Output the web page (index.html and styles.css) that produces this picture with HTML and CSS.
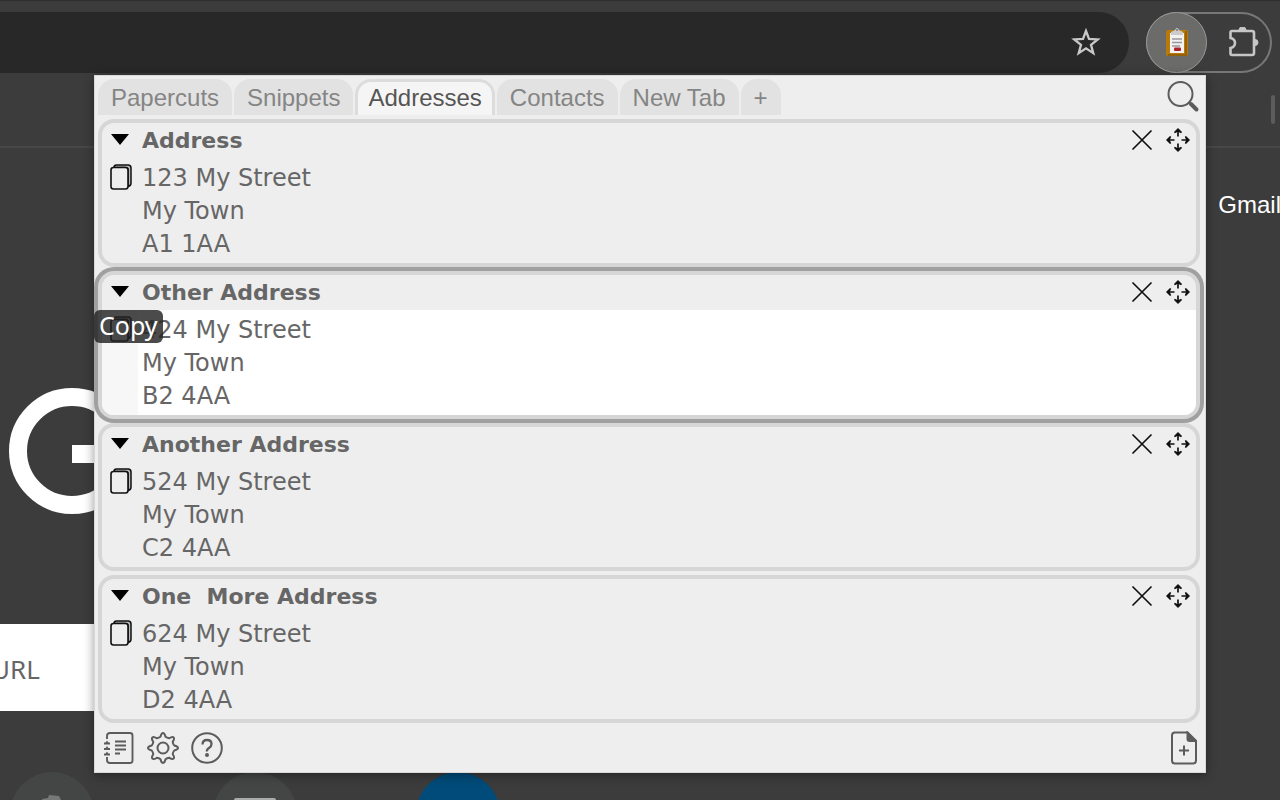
FILE: index.html
```html
<!DOCTYPE html>
<html lang="en">
<head>
<meta charset="utf-8">
<title>Papercuts</title>
<link rel="stylesheet" href="styles.css">
</head>
<body>
<svg class="defs" aria-hidden="true">
  <symbol id="close" viewBox="0 0 20 20"><path d="M1 1l18 18M19 1L1 19" fill="none" stroke="#111" stroke-width="1.7" stroke-linecap="round"/></symbol>
  <symbol id="move" viewBox="0 0 24 24"><path d="M12 8.500V2M12 15.500V22M8.500 12H2M15.500 12H22" fill="none" stroke="#111" stroke-width="1.700"/><path d="M12 0l4 4-.8 1.200-3.200-1.400-3.200 1.400L8 4zM12 24l4-4-.8-1.200-3.200 1.400-3.200-1.400L8 20zM0 12l4-4 1.200.8-1.400 3.200 1.400 3.200L4 16zM24 12l-4-4-1.200.8 1.400 3.200-1.400 3.200L20 16z" fill="#111"/></symbol>
  <symbol id="copy" viewBox="0 0 22 26"><path d="M4 3.500Q4 1 6.500 1H18q3 0 3 3v15q0 3-3 3.500V6q0-2.500-2.500-2.500z" fill="#bbb" stroke="#111" stroke-width="1.500"/><rect x="1" y="3.500" width="17" height="21.500" rx="2.500" fill="#eee" stroke="#111" stroke-width="1.600"/></symbol>
</svg>

<header class="toolbar">
  <div class="omnibox">
    <button class="plain" aria-label="Bookmark this tab"><svg width="30" height="30" viewBox="0 0 30 30"><path d="M15 3l3 8 8.700.4-6.700 5.400 2.300 8.400-7.300-4.800-7.300 4.800 2.300-8.400-6.700-5.400 8.700-.4z" fill="none" stroke="#c9c9c9" stroke-width="2.300"/></svg></button>
  </div>
  <div class="extensions">
    <button class="plain current" aria-label="Clipboard extension"><svg width="24" height="30" viewBox="0 0 24 30"><rect x="1" y="3" width="22" height="26" rx="2" fill="#b87a08"/><path d="M21 4v24H3" fill="none" stroke="#956006" stroke-width="2"/><path d="M5 6h14v20H5z" fill="#f2f2f2"/><path d="M7 12h10M7 15.500h10M7 19h8" stroke="#999" stroke-width="1.300"/><rect x="9" y="20.500" width="7" height="3.500" rx="1" fill="#b02028"/><path d="M6 8V5l4-2q2-4 4 0l4 2v3z" fill="#ccc"/><circle cx="12" cy="3" r="1" fill="#777"/></svg></button>
    <button class="plain" aria-label="Extensions"><svg width="32" height="32" viewBox="0 0 32 32"><path d="M5 4h20q2 0 2 2v20q0 2-2 2H5q-1.500 0-1.500-1.500V21q4.500-1 4.500-5t-4.500-5V5.500Q3.500 4 5 4z" fill="none" stroke="#c6c6c6" stroke-width="2.600"/><path d="M12 3q0-3 3.500-3T19 3zM28 12.500q3 0 3 3t-3 3z" fill="#c6c6c6" stroke="#c6c6c6"/></svg></button>
  </div>
</header>
<div class="bookmarks"><span class="divider"></span></div>
<main class="page">
  <nav class="links"><a href="#">Gmail</a></nav>
  <svg class="logo" width="128" height="128" viewBox="0 0 128 128" aria-label="Logo"><circle cx="64" cy="64" r="54" fill="none" stroke="#fff" stroke-width="18"/><path d="M64 58h60v18H64z" fill="#fff"/></svg>
  <div class="search">URL</div>
  <div class="shortcuts">
    <span class="dot"><svg width="84" height="84" viewBox="0 0 84 84"><path d="M32 27l6-1 1-3 10 1 2 4 5 3-4 12-16-2z" fill="#777"/></svg></span>
    <span class="dot"><svg width="84" height="84" viewBox="0 0 84 84"><rect x="21" y="26" width="42" height="28" rx="2" fill="#aaa"/></svg></span>
    <span class="dot blue"></span>
  </div>
</main>

<section class="popup" aria-label="Papercuts">
  <div class="top">
    <nav class="tabs">
      <button class="tab">Papercuts</button>
      <button class="tab">Snippets</button>
      <button class="tab active">Addresses</button>
      <button class="tab">Contacts</button>
      <button class="tab">New Tab</button>
      <button class="tab" aria-label="Add tab">+</button>
    </nav>
    <button class="plain" aria-label="Search"><svg width="34" height="34" viewBox="0 0 34 34"><circle cx="14.500" cy="15" r="12" fill="none" stroke="#5c5c5c" stroke-width="2"/><path d="M23 23.500l2 2" stroke="#5c5c5c" stroke-width="2.400"/><path d="M25 25l5.500 5.500" stroke="#5c5c5c" stroke-width="4" stroke-linecap="round"/></svg></button>
  </div>

  <div class="cards">
    <article class="card">
      <header class="head"><button class="plain toggle" aria-label="Collapse"></button><h2>Address</h2><button class="plain" aria-label="Delete"><svg width="20" height="20"><use href="#close"/></svg></button><button class="plain" aria-label="Move"><svg width="24" height="24"><use href="#move"/></svg></button></header>
      <div class="body"><div class="side"><button class="plain" aria-label="Copy"><svg width="22" height="26"><use href="#copy"/></svg></button></div><p class="text">123 My Street<br>My Town<br>A1 1AA</p></div>
    </article>
    <article class="card hover">
      <header class="head"><button class="plain toggle" aria-label="Collapse"></button><h2>Other Address</h2><button class="plain" aria-label="Delete"><svg width="20" height="20"><use href="#close"/></svg></button><button class="plain" aria-label="Move"><svg width="24" height="24"><use href="#move"/></svg></button></header>
      <div class="body"><div class="side"><button class="plain" aria-label="Copy"><svg width="22" height="26"><use href="#copy"/></svg></button><span class="tip" role="tooltip">Copy</span></div><p class="text">424 My Street<br>My Town<br>B2 4AA</p></div>
    </article>
    <article class="card">
      <header class="head"><button class="plain toggle" aria-label="Collapse"></button><h2>Another Address</h2><button class="plain" aria-label="Delete"><svg width="20" height="20"><use href="#close"/></svg></button><button class="plain" aria-label="Move"><svg width="24" height="24"><use href="#move"/></svg></button></header>
      <div class="body"><div class="side"><button class="plain" aria-label="Copy"><svg width="22" height="26"><use href="#copy"/></svg></button></div><p class="text">524 My Street<br>My Town<br>C2 4AA</p></div>
    </article>
    <article class="card">
      <header class="head"><button class="plain toggle" aria-label="Collapse"></button><h2>One  More Address</h2><button class="plain" aria-label="Delete"><svg width="20" height="20"><use href="#close"/></svg></button><button class="plain" aria-label="Move"><svg width="24" height="24"><use href="#move"/></svg></button></header>
      <div class="body"><div class="side"><button class="plain" aria-label="Copy"><svg width="22" height="26"><use href="#copy"/></svg></button></div><p class="text">624 My Street<br>My Town<br>D2 4AA</p></div>
    </article>
  </div>

  <footer class="bottom">
    <button class="plain" aria-label="Notebook"><svg width="32" height="32" viewBox="0 0 32 32" fill="none" stroke="#5c5c5c" stroke-width="1.900"><path d="M4 7V4q0-3 3-3h20q2.500 0 2.500 2.500v25q0 2.500-2.500 2.500H7q-3 0-3-3v-3"/><path d="M12 9.500h11M12 13.500h11M12 17.500h11M12 21.500h5" stroke-width="1.800"/><path d="M1 11.500h6M1 17h6M1 22.500h6"/><path d="M4 8.500l2 3H2zM4 14l2 3H2zM4 19.500l2 3H2z" fill="#5c5c5c" stroke="none"/></svg></button>
    <button class="plain" aria-label="Settings"><svg width="32" height="32" viewBox="0 0 32 32" fill="none" stroke="#5c5c5c" stroke-width="2" stroke-linejoin="round"><path d="M13.500 4.800Q14.400 1 16 1T18.500 4.800Q20 6 22.200 6.300Q25.400 4.100 26.600 5.400T25.700 9.800Q26 12 27.200 13.500Q31 14.400 31 16T27.200 18.500Q26 20 25.700 22.200Q27.900 25.400 26.600 26.600T22.200 25.700Q20 26 18.500 27.200Q17.600 31 16 31T13.500 27.200Q12 26 9.800 25.700Q6.600 27.900 5.400 26.600T6.300 22.200Q6 20 4.800 18.500Q1 17.600 1 16T4.800 13.500Q6 12 6.300 9.800Q4.100 6.600 5.400 5.400T9.800 6.300Q12 6 13.500 4.800z"/><circle cx="16" cy="16" r="5.500"/></svg></button>
    <button class="plain" aria-label="Help"><svg width="32" height="32" viewBox="0 0 32 32" fill="none" stroke="#5c5c5c" stroke-width="2"><circle cx="16" cy="16" r="14.800"/><path d="M11.500 12.500q0-4.500 4.500-4.500t4.500 4q0 2.500-2.500 4t-2 3.500" stroke-width="2.300"/><circle cx="16" cy="23" r="1" fill="#5c5c5c"/></svg></button>
    <button class="plain last" aria-label="New note"><svg width="26" height="34" viewBox="0 0 26 34" fill="none" stroke="#5c5c5c" stroke-width="2"><path d="M4 1.500h12.500L25 10v19.500q0 3-3 3H4q-3 0-3-3v-25q0-3 3-3z"/><path d="M16.500 1.500L25 10h-6.500q-2 0-2-2z" fill="#5c5c5c"/><path d="M13 14.500v10M8 19.500h10"/></svg></button>
  </footer>
</section>
</body>
</html>
```
FILE: styles.css
```css
* { box-sizing: border-box; }

body {
  margin: 0;
  min-height: 100vh;
  overflow: hidden;
  background: #3c3c3c;
  font-family: "Liberation Sans", Arial, sans-serif;
}

.defs { position: absolute; width: 0; height: 0; }
svg { display: block; flex: none; }

.plain {
  display: flex;
  padding: 0;
  border: 0;
  background: none;
}

/* Browser window */
.toolbar {
  display: flex;
  gap: 17px;
  padding: 11px 8px 0 0;
  border-top: 1px solid #2e2e2e;
}

.omnibox {
  display: flex;
  flex: 1;
  align-items: center;
  justify-content: flex-end;
  height: 61px;
  padding-right: 28px;
  border-radius: 0 31px 31px 0;
  background: #282828;
}

.extensions {
  display: flex;
  align-items: center;
  gap: 20px;
  height: 61px;
  padding-right: 13px;
  border-radius: 31px;
  box-shadow: inset 0 0 0 2px #777;
}

.current {
  align-items: center;
  justify-content: center;
  width: 61px;
  height: 61px;
  padding-bottom: 2px;
  border: 1px solid #999;
  border-radius: 50%;
  background: #6b6b69;
}

.bookmarks {
  display: flex;
  justify-content: flex-end;
  height: 75px;
  padding: 22px 5px 0 0;
  border-bottom: 2px solid #484848;
}

.divider { width: 4px; height: 29px; border-radius: 2px; background: #5c5c5c; }

.page { display: flex; flex-direction: column; height: 652px; overflow: hidden; }
.links { display: flex; justify-content: flex-end; padding-top: 42px; }
.links a { margin-right: -1px; color: #fff; font-size: 24px; line-height: 30px; text-decoration: none; }
.logo { margin: 167px 0 0 8px; }

.search {
  width: 400px;
  height: 87px;
  margin-top: 109px;
  margin-left: -17px;
  padding: 0 8px;
  background: #fff;
  color: #666;
  font-family: "Noto Sans", sans-serif;
  font-size: 26px;
  line-height: 90px;
}

.shortcuts { display: flex; gap: 119px; padding: 61px 0 0 10px; }
.dot { flex: none; width: 84px; height: 84px; border-radius: 50%; background: #444646; }
.blue { background: #004b7a; }

/* Extension popup */
.popup {
  position: absolute;
  top: 75px;
  right: 74px;
  left: 94px;
  border: 1px solid #d8d8d8;
  background: #eee;
  box-shadow: 0 2px 10px #0006;
}

.top {
  display: flex;
  align-items: flex-start;
  justify-content: space-between;
  padding: 3px 5px 0 3px;
}

.tabs { display: flex; gap: 2px; }

.tab {
  height: 36px;
  padding: 2px 13px 0;
  border: 0;
  border-radius: 16px 16px 0 0;
  background: #e2e2e2;
  color: #858585;
  font: 24px/32px "Liberation Sans", Arial, sans-serif;
}

.active {
  padding: 0 10px 1px;
  border: 3px solid #dcdcdc;
  border-bottom: 0;
  background: #f5f5f5;
  color: #555;
}

.cards {
  display: flex;
  flex-direction: column;
  gap: 4px;
  padding: 4px 5px 0 3px;
  font-family: Verdana, "DejaVu Sans", sans-serif;
}

.card {
  border: 4px solid #d6d6d6;
  border-radius: 16px;
  background: #eee;
}

.head {
  display: flex;
  align-items: center;
  gap: 14px;
  height: 35px;
  padding: 0 6px 2px 9px;
}

.toggle {
  border-top: 11px solid #000;
  border-right: 9px solid transparent;
  border-left: 9px solid transparent;
}

.head h2 {
  flex: 1;
  margin: 0 0 0 -1px;
  padding-top: 2px;
  color: #666;
  font-size: 22px;
  line-height: 33px;
  white-space: pre;
}

.body { display: flex; }
.side { position: relative; width: 36px; padding: 6px 0 0 8px; }

.text {
  flex: 1;
  margin: 0;
  padding: 4px 4px 2px;
  color: #666;
  font-size: 24px;
  line-height: 33px;
}

.hover { box-shadow: 0 0 0 4px #a0a0a0; }
.hover .body { border-radius: 0 0 12px 12px; background: #fff; }
.hover .side { border-radius: 0 0 0 12px; background: #f7f7f7; }

.tip {
  position: absolute;
  top: 0;
  left: -8px;
  z-index: 1;
  padding: 0 5px 2px;
  border-radius: 6px;
  background: #222222d0;
  color: #fff;
  font: 25px/31px "Noto Sans", sans-serif;
}

.bottom {
  display: flex;
  align-items: center;
  gap: 12px;
  height: 49px;
  padding: 0 8px;
}

.last { margin-left: auto; }
```
